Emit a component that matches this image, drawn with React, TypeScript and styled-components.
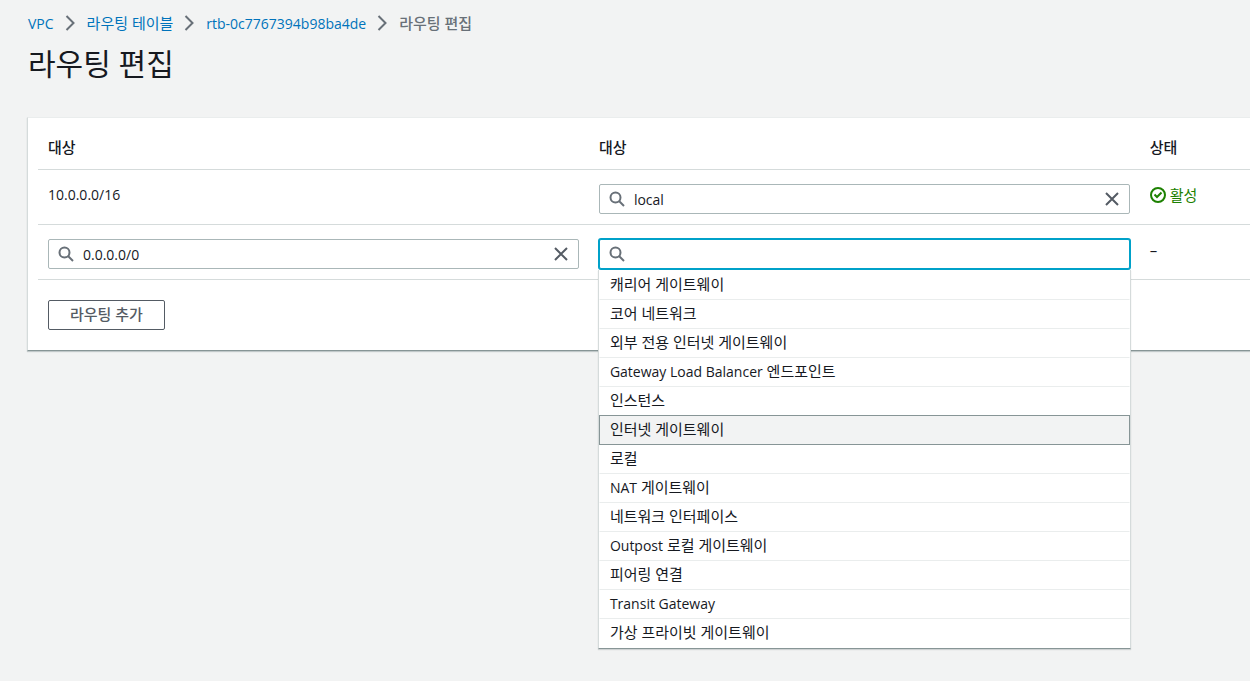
import React, { useState } from "react";
import styled, { createGlobalStyle, css } from "styled-components";

const color = {
  page: "#f2f3f3",
  text: "#16191f",
  muted: "#687078",
  control: "#545b64",
  link: "#0073bb",
  line: "#d5dbdb",
  optionLine: "#eaeded",
  inputBorder: "#aab7b8",
  edge: "#879596",
  focus: "#00a1c9",
  success: "#1d8102",
};

const GlobalStyle = createGlobalStyle`
  *, *::before, *::after { box-sizing: border-box; }
  body {
    margin: 0;
    background: ${color.page};
    color: ${color.text};
    font-family: "Open Sans", "Noto Sans CJK KR", sans-serif;
    font-size: 15px;
    line-height: 22px;
  }
  input, button { font: inherit; color: inherit; }
`;

const Page = styled.main`
  min-height: 100vh;
  padding: 11px 0 32px 28px;
`;

const Crumbs = styled.ol`
  display: flex;
  align-items: center;
  flex-wrap: wrap;
  margin: 0;
  padding: 0;
  list-style: none;
`;

const Crumb = styled.li`
  display: flex;
  align-items: center;
  height: 24px;
  color: ${color.muted};

  &[aria-current] {
    font-weight: 500;
  }

  svg {
    margin: 0 11px;
  }
`;

const CrumbLink = styled.a`
  color: ${color.link};
  text-decoration: none;
`;

const Latin = styled.span`
  font-size: 14px;
`;

const Title = styled.h1`
  margin: 9px 0 33px;
  font-size: 30px;
  font-weight: 400;
  line-height: 40px;
`;

const Card = styled.section`
  padding: 7px 0 20px 10px;
  background: #fff;
  border-left: 1px solid ${color.line};
  border-top: 1px solid ${color.optionLine};
  border-bottom: 1px solid ${color.edge};
  margin-left: -1px;
  box-shadow: 0 1px 1px rgba(0, 28, 36, 0.2);
`;

const Table = styled.table`
  width: 100%;
  table-layout: fixed;
  border-collapse: separate;
  border-spacing: 0;
`;

const WideCol = styled.col`
  width: calc(100% * 5 / 11);
`;

const HeadCell = styled.th`
  padding: 11px 10px;
  text-align: left;
  font-weight: 500;
  border-bottom: 1px solid ${color.line};
`;

const Cell = styled.td`
  height: 55px;
  padding: 14px 10px 10px;
  vertical-align: top;
  border-bottom: 1px solid ${color.line};
`;

const Address = styled.span`
  display: block;
  font-size: 14px;
`;

const Combo = styled.div`
  position: relative;
`;

const Field = styled.div<{ $active?: boolean }>`
  display: flex;
  align-items: center;
  gap: 9px;
  height: 30px;
  padding: 0 9px;
  border: 1px solid ${color.inputBorder};
  border-radius: 2px;
  background: #fff;
  ${(p) =>
    p.$active &&
    css`
      border-color: ${color.focus};
      box-shadow: 0 0 0 1px ${color.focus};
    `}
`;

const Input = styled.input`
  flex: 1;
  min-width: 0;
  height: 100%;
  padding: 0;
  border: 0;
  outline: 0;
  background: none;
  font-size: 14px;
`;

const ClearButton = styled.button`
  display: flex;
  padding: 0;
  border: 0;
  background: none;
  cursor: pointer;
`;

const Menu = styled.ul`
  position: absolute;
  z-index: 1;
  top: 100%;
  left: 0;
  right: 0;
  margin: 1px -1px 0;
  padding: 0;
  list-style: none;
  background: #fff;
  border: 1px solid ${color.line};
  border-top: 0;
  border-bottom-color: ${color.edge};
  box-shadow: 0 1px 1px rgba(0, 28, 36, 0.15);
`;

const Option = styled.li<{ $highlighted: boolean }>`
  height: 30px;
  padding: 2px 10px;
  border: 1px solid transparent;
  border-bottom-color: ${color.optionLine};
  cursor: pointer;

  & + & {
    margin-top: -1px;
  }
  &:last-child {
    border-bottom-color: transparent;
  }
  ${(p) =>
    p.$highlighted &&
    css`
      position: relative;
      background: ${color.page};
      &&& {
        border-color: ${color.edge};
      }
    `}
`;

const Status = styled.span`
  display: flex;
  align-items: center;
  gap: 4px;
  color: ${color.success};
`;

const AddButton = styled.button`
  height: 30px;
  margin: 20px 0 0 10px;
  padding: 0 21px 2px;
  border: 1px solid ${color.control};
  border-radius: 2px;
  background: #fff;
  color: ${color.control};
  font-weight: 500;
  line-height: 26px;
  cursor: pointer;
`;

const Chevron = () => (
  <svg width="11" height="16" viewBox="0 0 11 16" fill="none" stroke={color.muted} strokeWidth="2" aria-hidden="true">
    <path d="M1.5 1l7 7-7 7" />
  </svg>
);

const SearchIcon = () => (
  <svg width="16" height="16" viewBox="0 0 16 16" fill="none" stroke={color.muted} strokeWidth="2" aria-hidden="true">
    <circle cx="6.5" cy="6.5" r="5" />
    <path d="M10 10l5 5" />
  </svg>
);

const CloseIcon = () => (
  <svg width="16" height="16" viewBox="0 0 16 16" fill="none" stroke={color.control} strokeWidth="2" aria-hidden="true">
    <path d="M2 2l12 12M14 2L2 14" />
  </svg>
);

const CheckIcon = () => (
  <svg width="16" height="16" viewBox="0 0 16 16" fill="none" stroke={color.success} strokeWidth="2" aria-hidden="true">
    <circle cx="8" cy="8" r="7" />
    <path d="M4.5 7.5l2.5 2.5L11.5 5.5" />
  </svg>
);

/** Sets runs of Latin letters and digits in the smaller Latin size. */
const Mixed = ({ text }: { text: string }) => (
  <>
    {text
      .split(/([\x21-\x7e]+(?: [\x21-\x7e]+)*)/)
      .map((part, i) => (i % 2 ? <Latin key={i}>{part}</Latin> : part))}
  </>
);

const SearchField = ({
  label,
  initial = "",
  active,
}: {
  label: string;
  initial?: string;
  active?: boolean;
}) => {
  const [value, setValue] = useState(initial);
  return (
    <Field $active={active}>
      <SearchIcon />
      <Input aria-label={label} value={value} onChange={(e) => setValue(e.target.value)} />
      {value && (
        <ClearButton type="button" aria-label="지우기" onClick={() => setValue("")}>
          <CloseIcon />
        </ClearButton>
      )}
    </Field>
  );
};

const crumbs = ["VPC", "라우팅 테이블", "rtb-0c7767394b98ba4de"];

const targets = [
  "캐리어 게이트웨이",
  "코어 네트워크",
  "외부 전용 인터넷 게이트웨이",
  "Gateway Load Balancer 엔드포인트",
  "인스턴스",
  "인터넷 게이트웨이",
  "로컬",
  "NAT 게이트웨이",
  "네트워크 인터페이스",
  "Outpost 로컬 게이트웨이",
  "피어링 연결",
  "Transit Gateway",
  "가상 프라이빗 게이트웨이",
];

export default function App() {
  const [highlighted, setHighlighted] = useState("인터넷 게이트웨이");

  return (
    <>
      <GlobalStyle />
      <Page>
        <nav aria-label="탐색 경로">
          <Crumbs>
            {crumbs.map((name) => (
              <Crumb key={name}>
                <CrumbLink href="#">
                  <Mixed text={name} />
                </CrumbLink>
                <Chevron />
              </Crumb>
            ))}
            <Crumb aria-current="page">라우팅 편집</Crumb>
          </Crumbs>
        </nav>
        <Title>라우팅 편집</Title>
        <Card>
          <Table>
            <colgroup>
              <WideCol />
              <WideCol />
              <col />
            </colgroup>
            <thead>
              <tr>
                <HeadCell scope="col">대상</HeadCell>
                <HeadCell scope="col">대상</HeadCell>
                <HeadCell scope="col">상태</HeadCell>
              </tr>
            </thead>
            <tbody>
              <tr>
                <Cell>
                  <Address>10.0.0.0/16</Address>
                </Cell>
                <Cell>
                  <SearchField label="대상" initial="local" />
                </Cell>
                <Cell>
                  <Status>
                    <CheckIcon />
                    활성
                  </Status>
                </Cell>
              </tr>
              <tr>
                <Cell>
                  <SearchField label="대상" initial="0.0.0.0/0" />
                </Cell>
                <Cell>
                  <Combo>
                    <SearchField label="대상" active />
                    <Menu role="listbox" aria-label="대상">
                      {targets.map((name) => (
                        <Option
                          key={name}
                          role="option"
                          aria-selected={name === highlighted}
                          $highlighted={name === highlighted}
                          onMouseEnter={() => setHighlighted(name)}
                        >
                          <Mixed text={name} />
                        </Option>
                      ))}
                    </Menu>
                  </Combo>
                </Cell>
                <Cell>–</Cell>
              </tr>
            </tbody>
          </Table>
          <AddButton type="button">라우팅 추가</AddButton>
        </Card>
      </Page>
    </>
  );
}
